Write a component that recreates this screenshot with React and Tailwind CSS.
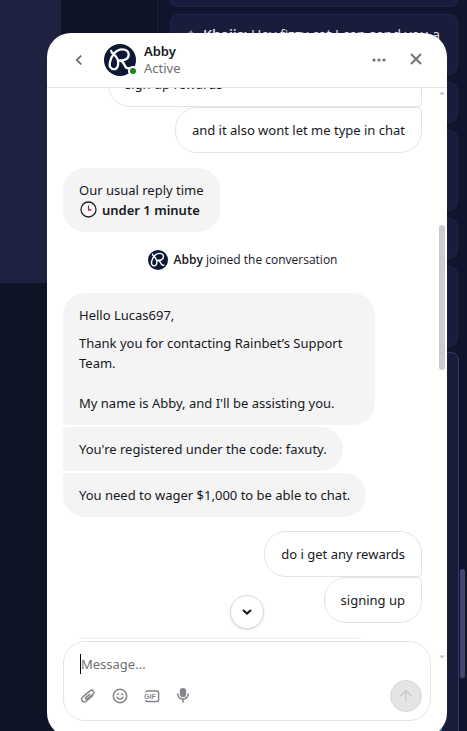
import { ArrowUp, X } from "lucide-react";

const firstMessages = [
  { id: 1, text: "sign up rewards", position: "middle", width: "w-[314px]" },
  { id: 2, text: "and it also wont let me type in chat", position: "last" },
];

const latestMessages = [
  { id: 5, text: "do i get any rewards", position: "first" },
  { id: 6, text: "signing up", position: "last" },
];

const userShape = {
  first: "rounded-[22px] rounded-br-sm",
  middle: "rounded-[22px] rounded-r-sm",
  last: "rounded-[22px] rounded-tr-sm",
};

const agentShape = {
  single: "rounded-[22px]",
  first: "rounded-[22px] rounded-bl-sm",
  middle: "rounded-[22px] rounded-l-sm",
  last: "rounded-[22px] rounded-tl-sm",
};

// heights of the cards in the chat feed behind the widget
const feedCards = ["h-[41px]", "h-[81px]", "h-[41px]", "h-[81px]"];

function Logo({ className }) {
  return (
    <svg viewBox="0 0 32 32" className={className} aria-hidden="true">
      <circle cx="16" cy="16" r="16" fill="#0d1838" />
      <path
        d="M7.2 6.8c-.4 3 6.6 4.4 7 11.2.3 4.4-1.5 7.4-4.2 7.4-3.2 0-5-2.9-4.2-6.7C7 12.2 11.6 5.4 18.2 5.4c4.2 0 6.6 2.1 6.5 5.3-.1 4-4.2 6.2-9 5.7 3.5.7 4.1 3.2 5.2 5.4 1 2.1 2.6 3.1 4.6 2.4"
        fill="none"
        stroke="#fff"
        strokeWidth="2.3"
        strokeLinecap="round"
        strokeLinejoin="round"
      />
    </svg>
  );
}

function ClockIcon() {
  return (
    <svg width="18" height="18" viewBox="0 0 18 18" fill="none" aria-hidden="true">
      <circle cx="9.5" cy="8.5" r="7.5" fill="#fafafa" stroke="#222" strokeWidth="1.3" />
      <path d="M9.5 4.5v4.7" stroke="#444" strokeWidth="1.2" />
      <path d="M9 9h3.5" stroke="#c8283c" strokeWidth="1.3" />
    </svg>
  );
}

function PaperclipIcon() {
  return (
    <svg width="16" height="16" viewBox="0 0 16 16" fill="none" stroke="currentColor" strokeWidth="1.5" strokeLinecap="round">
      <path d="M9.6 6.4 5.9 9.6a1 1 0 0 0 1.3 1.5l5.9-5.1a2.2 2.2 0 0 0-2.9-3.3L2.6 9.1a2.7 2.7 0 0 0 3.6 4.1l6.6-5.7" />
    </svg>
  );
}

function SmileIcon() {
  return (
    <svg width="16" height="16" viewBox="0 0 16 16" fill="none" stroke="currentColor" strokeWidth="1.6" strokeLinecap="round">
      <circle cx="8" cy="8" r="6.7" />
      <path d="M5 9.4c1.2 2.1 4.8 2.1 6 0" />
      <circle cx="5.9" cy="6.2" r=".6" fill="currentColor" strokeWidth=".6" />
      <circle cx="10.1" cy="6.2" r=".6" fill="currentColor" strokeWidth=".6" />
    </svg>
  );
}

function GifIcon() {
  return (
    <svg width="16" height="16" viewBox="0 0 16 16" fill="none" stroke="currentColor" strokeWidth="1.5">
      <path d="M2 4.4v-.2c0-.7.5-1.2 1.2-1.2h10.2c.7 0 1.2.5 1.2 1.2v8c0 .7-.5 1.2-1.2 1.2H3.2c-.7 0-1.2-.5-1.2-1.2V12" />
      <text x="0" y="10.7" fontSize="7" fontWeight="700" fontFamily="Liberation Sans, sans-serif" fill="currentColor" stroke="none">GIF</text>
    </svg>
  );
}

function MicIcon() {
  return (
    <svg width="14" height="16" viewBox="0 0 14 16" fill="none" stroke="currentColor" strokeWidth="1.6">
      <rect x="3.8" y="0" width="6.4" height="9.2" rx="3.2" fill="currentColor" stroke="none" />
      <path d="M1.7 5.6c0 7.2 10.6 7.2 10.6 0M7 10.8v3.6" />
    </svg>
  );
}

function UserBubble({ message }) {
  return (
    <div className={`border border-[#e3e5e5] bg-white px-4 py-3 ${message.width || ""} ${userShape[message.position]}`}>
      {message.text}
    </div>
  );
}

function AgentBubble({ position, children }) {
  return <div className={`max-w-[312px] bg-[#f4f4f4] px-4 py-3 ${agentShape[position]}`}>{children}</div>;
}

function Backdrop() {
  return (
    <div className="absolute inset-0 flex overflow-hidden bg-[#0e1326]">
      <div className="h-[283px] w-[61px] shrink-0 bg-[#1e2140]" />
      <div className="w-24 shrink-0" />
      <div className="min-w-0 flex-1 border-l border-[#1b1f3a] bg-[#10142c] pl-3 pr-[9px]">
        <div className="h-[7px] rounded-b-lg border border-t-0 border-[#20244a] bg-[#191d3b]" />
        <div className="mt-[7px] flex flex-col gap-[7px]">
          <div className="h-[61px] overflow-hidden rounded-lg border border-[#1f2345] bg-[#191d3b] py-[10px] pl-4 font-['Open_Sans','Noto_Sans',sans-serif] text-sm text-[#e2e2e8]">
            <span className="mr-2 inline-block size-2 rotate-45 bg-[#8d8078]" />
            <span className="whitespace-nowrap"><b className="font-semibold">Khaiis:</b> Hey fizzy cat I can send you a</span>
          </div>
          {feedCards.map((height, index) => (
            <div key={index} className={`rounded-lg border border-[#1f2345] bg-[#191d3b] ${height}`} />
          ))}
        </div>
        <div className="-mr-px mt-[5px] flex h-[390px] flex-col justify-end rounded-lg border border-[#343863] bg-[#191d3b] px-4">
          <div className="h-4 bg-[#1d6fb8]" />
        </div>
      </div>
      <div className="absolute right-[2px] top-[569px] h-[109px] w-[5px] rounded-full bg-[#44466f]" />
    </div>
  );
}

function Header() {
  return (
    <header className="flex h-[55px] shrink-0 items-center border-b border-[#e3e5e5] pl-5 pr-[21px] text-[#6e7073]">
      <button aria-label="Back" className="flex w-6 justify-center">
        <svg width="8" height="12" viewBox="0 0 8 12" fill="none" stroke="currentColor" strokeWidth="1.8">
          <path d="M6.2 1.6 1.8 6l4.4 4.4" />
        </svg>
      </button>
      <div className="relative ml-[13px] size-8">
        <Logo className="size-8" />
        <span className="absolute -right-0.5 bottom-0 size-[10px] rounded-full border-2 border-white bg-[#128a10]" />
      </div>
      <div className="ml-2 flex-1 text-[13px] leading-[17px]">
        <h1 className="font-semibold text-[#16181c]">Abby</h1>
        <p>Active</p>
      </div>
      <button aria-label="More options" className="flex w-6 justify-center">
        <svg width="14" height="4" viewBox="0 0 14 4" fill="currentColor">
          <circle cx="2" cy="2" r="1.6" />
          <circle cx="7" cy="2" r="1.6" />
          <circle cx="12" cy="2" r="1.6" />
        </svg>
      </button>
      <button aria-label="Close" className="ml-[15px] flex w-5 justify-center pb-0.5">
        <X size={18} strokeWidth={2.4} />
      </button>
    </header>
  );
}

function Scrollbar() {
  return (
    <div className="absolute right-0.5 top-[58px] flex h-[568px] w-[6px] flex-col items-center justify-between" aria-hidden="true">
      <svg width="6" height="4" viewBox="0 0 6 4" fill="#c4c6c6"><path d="M3 .5 6 3.5H0z" /></svg>
      <div className="-mt-[156px] h-[145px] w-[6px] rounded-full bg-[#cbcccd]" />
      <svg width="6" height="4" viewBox="0 0 6 4" fill="#c4c6c6"><path d="M0 .5h6l-3 3z" /></svg>
    </div>
  );
}

function Composer() {
  return (
    <form className="relative mx-4 mb-4 mt-0.5 h-20 shrink-0 rounded-[22px] border border-[#e3e5e5] bg-white px-4 pt-3" onSubmit={(e) => e.preventDefault()}>
      <div className="flex h-5">
        <span className="w-px shrink-0 bg-black" />
        <input aria-label="Message" placeholder="Message..." className="w-full outline-none placeholder:text-[#6e7073]" />
      </div>
      <div className="mt-[14px] flex gap-4 text-[#85878c]">
        <button type="button" aria-label="Attach a file"><PaperclipIcon /></button>
        <button type="button" aria-label="Insert emoji"><SmileIcon /></button>
        <button type="button" aria-label="Insert GIF"><GifIcon /></button>
        <button type="button" aria-label="Record voice"><MicIcon /></button>
      </div>
      <button aria-label="Send" className="absolute bottom-2 right-2 flex size-8 items-center justify-center rounded-full border border-[#d6d6d6] bg-[#e5e5e5] text-[#cbcbcb]">
        <ArrowUp size={18} />
      </button>
    </form>
  );
}

export default function App() {
  return (
    <main className="relative h-screen overflow-hidden pl-[47px] pr-5 pt-[33px] font-['Noto_Sans','Open_Sans',sans-serif] text-[13px] leading-5 text-[#16181c]">
      <Backdrop />
      <section className="relative flex h-[calc(100%+6px)] flex-col overflow-hidden rounded-3xl bg-white">
        <Header />
        <div className="relative min-h-0 flex-1 overflow-hidden">
          <div className="-mt-[27px] flex flex-col pl-4 pr-[25px]">
            <div className="flex flex-col items-end">
              {firstMessages.map((message) => <UserBubble key={message.id} message={message} />)}
            </div>
            <div className="mt-[15px] flex">
              <AgentBubble position="single">
                <p>Our usual reply time</p>
                <p className="flex items-center gap-[5px] font-semibold"><ClockIcon />under 1 minute</p>
              </AgentBubble>
            </div>
            <div className="mt-[18px] flex items-center justify-center gap-1.5 font-['Open_Sans','Noto_Sans',sans-serif] text-xs leading-5">
              <Logo className="size-5" />
              <p><span className="font-semibold">Abby</span> joined the conversation</p>
            </div>
            <div className="mt-[23px] flex flex-col items-start gap-0.5">
              <AgentBubble position="first">
                <p>Hello Lucas697,</p>
                <p className="mb-5 mt-2">Thank you for contacting Rainbet’s Support Team.</p>
                <p>My name is Abby, and I'll be assisting you.</p>
              </AgentBubble>
              <AgentBubble position="middle">You're registered under the code: faxuty.</AgentBubble>
              <AgentBubble position="last">You need to wager $1,000 to be able to chat.</AgentBubble>
            </div>
            <div className="mt-[14px] flex flex-col items-end">
              {latestMessages.map((message) => <UserBubble key={message.id} message={message} />)}
            </div>
            <div className="mt-[14px] h-16 w-[312px] rounded-[22px] bg-[#f4f4f4]" />
          </div>
          <button aria-label="Scroll to latest" className="absolute bottom-[10px] left-1/2 flex size-[34px] -translate-x-1/2 items-center justify-center rounded-full border border-[#d9dada] bg-white shadow-sm">
            <svg width="10" height="8" viewBox="0 0 10 8" fill="none" stroke="currentColor" strokeWidth="2">
              <path d="M1 2l4 3.6L9 2" />
            </svg>
          </button>
        </div>
        <Composer />
        <Scrollbar />
      </section>
    </main>
  );
}
